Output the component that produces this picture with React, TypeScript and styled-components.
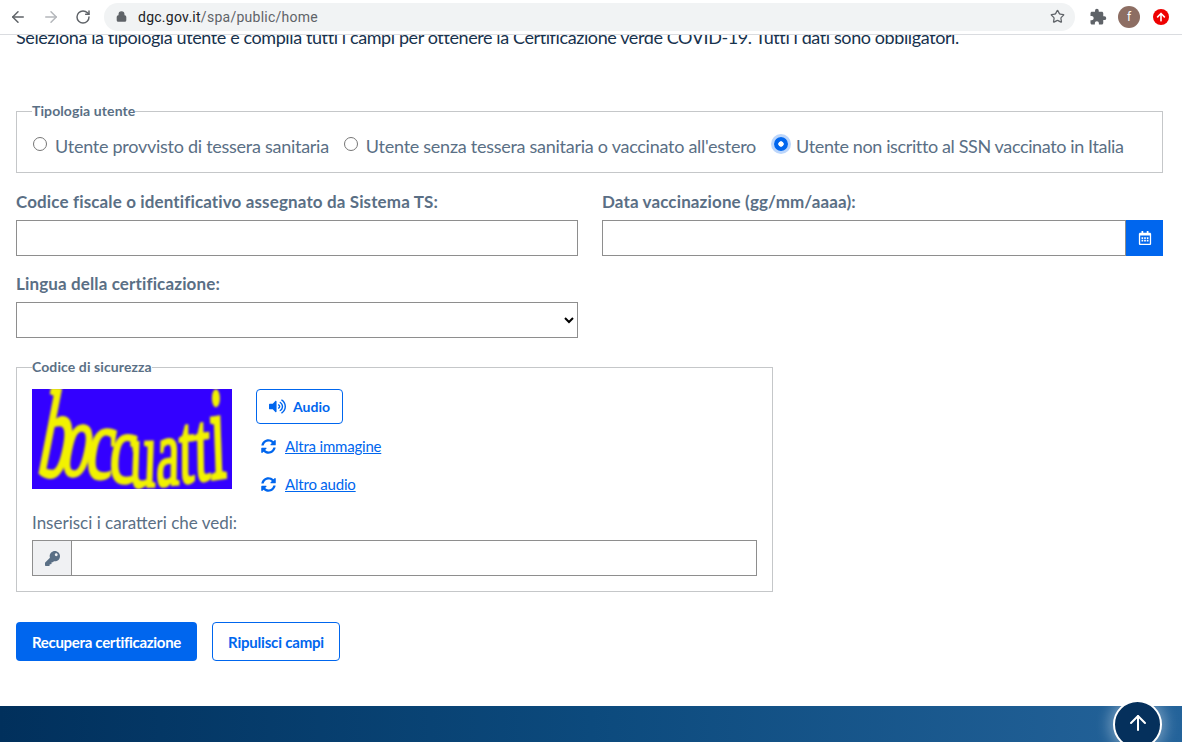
import React from 'react';
import styled, { createGlobalStyle } from 'styled-components';
import { ArrowLeft, ArrowRight, RotateCw, Star, Lock, ArrowUp } from 'lucide-react';
import { FaVolumeUp, FaSyncAlt, FaKey, FaRegCalendarAlt, FaArrowUp } from 'react-icons/fa';
import { MdExtension } from 'react-icons/md';

const BLUE = '#0066ee';
const SLATE = '#5a6f85';
const LABEL_FONT = `Lato, "Noto Sans", sans-serif`;

const GlobalStyle = createGlobalStyle`
  html, body { margin: 0; padding: 0; height: 100%; overflow: hidden; background: #fff; }
  * { box-sizing: border-box; }
  body { font-family: ${LABEL_FONT}; }
`;

const Page = styled.div`
  width: 1182px;
  height: 742px;
  display: flex;
  flex-direction: column;
`;

const BrowserBar = styled.header`
  flex: 0 0 35px;
  display: flex;
  align-items: center;
  padding: 0 12px 1px 9px;
  border-bottom: 1px solid #dadce0;
  background: #fff;
  position: relative;
  z-index: 2;
`;

const NavIcon = styled.span<{ $dim?: boolean; $gap: number }>`
  display: flex;
  color: ${p => (p.$dim ? '#b4b7bb' : '#5f6368')};
  margin-right: ${p => p.$gap}px;
`;

const Omnibox = styled.div`
  width: 971px;
  height: 28px;
  border-radius: 14px;
  background: #f1f3f4;
  display: flex;
  align-items: center;
  padding: 0 10px 0 12px;
  margin-right: 14px;
`;

const Url = styled.div`
  flex: 1;
  margin-left: 11px;
  font: 14px Roboto, sans-serif;
  letter-spacing: 0.26px;
  color: #5f6368;
  b { font-weight: 400; color: #202124; }
`;

const Avatar = styled.span`
  width: 22px;
  height: 22px;
  border-radius: 50%;
  background: #8d6e63;
  color: #fff;
  font: 12px Roboto, sans-serif;
  display: flex;
  align-items: center;
  justify-content: center;
  margin: 0 13px 0 11px;
`;

const UploadBadge = styled.span`
  width: 16px;
  height: 16px;
  border-radius: 50%;
  background: #ee0000;
  color: #fff;
  display: flex;
  align-items: center;
  justify-content: center;
`;

const Content = styled.main`
  flex: 1;
  overflow: hidden;
  padding: 0 19px 0 16px;
  color: ${SLATE};
`;

const Intro = styled.p`
  margin: -11px 0 0;
  font-size: 18px;
  line-height: 27px;
  letter-spacing: -0.4px;
  color: #17324d;
  white-space: nowrap;
`;

const Group = styled.fieldset<{ $width?: number }>`
  margin: 0;
  min-width: 0;
  border: 1px solid #c5c7c9;
  padding: 0 15px;
  width: ${p => (p.$width ? `${p.$width}px` : '100%')};
`;

const Legend = styled.legend`
  padding: 0;
  font-size: 14px;
  line-height: 18px;
  font-weight: 700;
  letter-spacing: 0.1px;
  color: ${SLATE};
`;

const UserTypeGroup = styled(Group)`
  margin-top: 51px;
  height: 71px;
`;

const RadioRow = styled.div`
  display: flex;
  align-items: center;
  height: 43px;
  padding-top: 12px;
  margin-top: -2px;
`;

const RadioOption = styled.label<{ $gap: number; $tight?: boolean }>`
  display: flex;
  align-items: center;
  font-size: 18px;
  letter-spacing: ${p => (p.$tight ? '-0.38px' : '-0.27px')};
  color: ${SLATE};
  margin-right: ${p => p.$gap}px;
  white-space: nowrap;
`;

const Radio = styled.input.attrs({ type: 'radio' })`
  appearance: none;
  margin: -3px 8px 0 1px;
  flex: none;
  width: 14px;
  height: 14px;
  border-radius: 50%;
  border: 1px solid #767676;
  background: #fff;
  &:checked {
    border: 0;
    background: radial-gradient(circle, #fff 0 2.4px, ${BLUE} 3px);
    box-shadow: 0 0 0 3px #bcd6fb;
  }
`;

const FieldGrid = styled.div`
  display: grid;
  grid-template-columns: 562px 561px;
  column-gap: 24px;
  row-gap: 16px;
  margin-top: 17px;
`;

const Field = styled.div`
  display: flex;
  flex-direction: column;
`;

const FieldLabel = styled.label`
  font-size: 17px;
  line-height: 24px;
  font-weight: 700;
  letter-spacing: 0.13px;
  color: ${SLATE};
  margin-bottom: 6px;
  white-space: nowrap;
`;

const TextInput = styled.input`
  flex: 1;
  width: 100%;
  min-width: 0;
  height: 36px;
  border: 1px solid #8e8e8e;
  border-radius: 0;
  background: #fff;
  outline: none;
`;

const SelectInput = styled.select`
  width: 100%;
  height: 36px;
  border: 1px solid #8e8e8e;
  border-radius: 0;
  background: #fff;
`;

const InputRow = styled.div`
  display: flex;
`;

const CalendarButton = styled.button`
  flex: 0 0 37px;
  height: 36px;
  border: 0;
  padding: 0;
  background: ${BLUE};
  color: #fff;
  display: flex;
  align-items: center;
  justify-content: center;
`;

const CaptchaGroup = styled(Group)`
  margin-top: 20px;
  height: 234px;
`;

const CaptchaRow = styled.div`
  display: flex;
  margin-top: 13px;
  height: 100px;
`;

const CaptchaActions = styled.div`
  margin-left: 24px;
  display: flex;
  flex-direction: column;
  align-items: flex-start;
  > * { flex: none; }
`;

const OutlineButton = styled.button`
  height: 35px;
  padding: 0 12px;
  border: 1px solid ${BLUE};
  border-radius: 4px;
  background: #fff;
  color: ${BLUE};
  font: 700 14px ${LABEL_FONT};
  display: flex;
  align-items: center;
  gap: 7px;
`;

const RefreshLink = styled.a<{ $top: number }>`
  display: flex;
  align-items: center;
  gap: 9px;
  margin: ${p => p.$top}px 0 0 5px;
  font-size: 15px;
  line-height: 20px;
  letter-spacing: -0.2px;
  color: ${BLUE};
  svg { flex: none; }
  span { text-decoration: underline; }
`;

const CaptchaInputLabel = styled.label`
  display: block;
  margin-top: 22px;
  font-size: 17px;
  line-height: 24px;
  color: ${SLATE};
`;

const AddonRow = styled(InputRow)`
  margin-top: 5px;
`;

const Addon = styled.span`
  flex: 0 0 39px;
  height: 36px;
  border: 1px solid #8e8e8e;
  border-right: 0;
  background: #f0f1f3;
  color: ${SLATE};
  display: flex;
  align-items: center;
  justify-content: center;
`;

const Actions = styled.div`
  display: flex;
  gap: 15px;
  margin-top: 30px;
`;

const PrimaryButton = styled.button`
  width: 181px;
  height: 39px;
  border: 0;
  border-radius: 4px;
  background: ${BLUE};
  color: #fff;
  font: 700 15px ${LABEL_FONT};
  letter-spacing: -0.3px;
`;

const SecondaryButton = styled(OutlineButton)`
  width: 128px;
  height: 39px;
  justify-content: center;
  font-size: 15px;
  letter-spacing: -0.2px;
`;

const Footer = styled.footer`
  flex: 0 0 36px;
  position: relative;
  background: linear-gradient(90deg, #01305c 0%, #0c4a7d 50%, #24639a 100%);
`;

const BackToTop = styled.a`
  position: absolute;
  left: 1113px;
  top: -6px;
  width: 49px;
  height: 49px;
  border-radius: 50%;
  border: 2px solid #fff;
  background: #05305c;
  color: #fff;
  box-shadow: 0 0 14px 4px rgba(255, 255, 255, 0.35);
  display: flex;
  justify-content: center;
  padding-top: 9px;
`;

const letters = [
  { c: 'b', x: 3, y: 86, sx: 1, sy: 2, sk: -8, r: 3 },
  { c: 'o', x: 27, y: 85, sx: 0.9, sy: 1.7, sk: -8, r: 4 },
  { c: 'c', x: 52, y: 88, sx: 0.98, sy: 1.65, sk: -6, r: 3 },
  { c: 'c', x: 76, y: 93, sx: 0.98, sy: 1.6, sk: -4, r: 1 },
  { c: 'u', x: 97, y: 98, sx: 0.85, sy: 1.55, sk: -4, r: -2 },
  { c: 'a', x: 124, y: 97, sx: 0.85, sy: 1.55, sk: -6, r: -5 },
  { c: 't', x: 147, y: 94, sx: 0.9, sy: 1.6, sk: -6, r: -6 },
  { c: 't', x: 163, y: 92, sx: 0.9, sy: 1.6, sk: -6, r: -7 },
  { c: 'i', x: 179, y: 90, sx: 0.95, sy: 2.1, sk: -6, r: -8 },
];

// distorted captcha picture
const Captcha = () => (
  <svg width="200" height="100" viewBox="0 0 200 100" style={{ flex: 'none' }}>
    <defs>
      <filter id="soft" x="-20%" y="-20%" width="140%" height="140%">
        <feGaussianBlur stdDeviation="1.2" />
      </filter>
    </defs>
    <rect width="200" height="100" fill="#3300ff" />
    <g filter="url(#soft)" fill="#f2f200" stroke="#f2f200" strokeWidth="2" fontFamily='"Liberation Serif", serif' fontSize="62">
      {letters.map((l, i) => (
        <text key={i} transform={`translate(${l.x} ${l.y}) rotate(${l.r}) skewX(${l.sk}) scale(${l.sx} ${l.sy})`}>
          {l.c}
        </text>
      ))}
    </g>
  </svg>
);

export default function App() {
  return (
    <Page>
      <GlobalStyle />
      <BrowserBar>
        <NavIcon $gap={15}><ArrowLeft size={18} strokeWidth={2} /></NavIcon>
        <NavIcon $gap={15} $dim><ArrowRight size={18} strokeWidth={2} /></NavIcon>
        <NavIcon $gap={13}><RotateCw size={16} strokeWidth={2.2} /></NavIcon>
        <Omnibox>
          <NavIcon $gap={0}><Lock size={11} strokeWidth={3} fill="#5f6368" /></NavIcon>
          <Url><b>dgc.gov.it</b>/spa/public/home</Url>
          <NavIcon $gap={0}><Star size={15} strokeWidth={2} /></NavIcon>
        </Omnibox>
        <NavIcon $gap={0}><MdExtension size={18} /></NavIcon>
        <Avatar>f</Avatar>
        <UploadBadge><FaArrowUp size={10} /></UploadBadge>
      </BrowserBar>

      <Content>
        <Intro>
          Seleziona la tipologia utente e compila tutti i campi per ottenere la Certificazione verde COVID-19. Tutti i dati sono obbligatori.
        </Intro>

        <UserTypeGroup>
          <Legend>Tipologia utente</Legend>
          <RadioRow>
            <RadioOption $gap={14}><Radio name="tipo" />Utente provvisto di tessera sanitaria</RadioOption>
            <RadioOption $gap={17}><Radio name="tipo" />Utente senza tessera sanitaria o vaccinato all'estero</RadioOption>
            <RadioOption $gap={0} $tight><Radio name="tipo" defaultChecked />Utente non iscritto al SSN vaccinato in Italia</RadioOption>
          </RadioRow>
        </UserTypeGroup>

        <FieldGrid>
          <Field>
            <FieldLabel>Codice fiscale o identificativo assegnato da Sistema TS:</FieldLabel>
            <TextInput />
          </Field>
          <Field>
            <FieldLabel>Data vaccinazione (gg/mm/aaaa):</FieldLabel>
            <InputRow>
              <TextInput />
              <CalendarButton><FaRegCalendarAlt size={14} /></CalendarButton>
            </InputRow>
          </Field>
          <Field>
            <FieldLabel>Lingua della certificazione:</FieldLabel>
            <SelectInput />
          </Field>
        </FieldGrid>

        <CaptchaGroup $width={757}>
          <Legend>Codice di sicurezza</Legend>
          <CaptchaRow>
            <Captcha />
            <CaptchaActions>
              <OutlineButton><FaVolumeUp size={17} />Audio</OutlineButton>
              <RefreshLink $top={12}><FaSyncAlt size={15} /><span>Altra immagine</span></RefreshLink>
              <RefreshLink $top={18}><FaSyncAlt size={15} /><span>Altro audio</span></RefreshLink>
            </CaptchaActions>
          </CaptchaRow>
          <CaptchaInputLabel>Inserisci i caratteri che vedi:</CaptchaInputLabel>
          <AddonRow>
            <Addon><FaKey size={15} /></Addon>
            <TextInput />
          </AddonRow>
        </CaptchaGroup>

        <Actions>
          <PrimaryButton>Recupera certificazione</PrimaryButton>
          <SecondaryButton>Ripulisci campi</SecondaryButton>
        </Actions>
      </Content>

      <Footer>
        <BackToTop><ArrowUp size={24} strokeWidth={2} /></BackToTop>
      </Footer>
    </Page>
  );
}
